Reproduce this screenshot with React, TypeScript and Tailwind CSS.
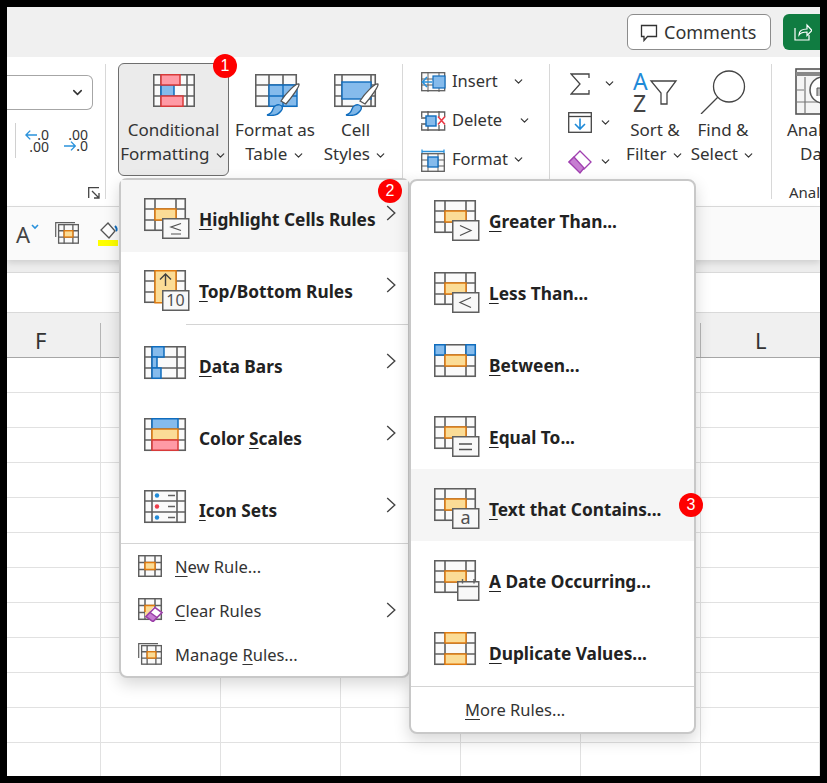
import { ReactNode } from "react";
import { LuChevronDown } from "react-icons/lu";

const GRAY = "#5f5f5f";
const ORANGE = "#e07b10";
const BLUE = "#0f6cbd";
const LBLUE = "#85bbec";
const PINK = "#ff9aa5";
const RED = "#d83a3a";
const YEL = "#fbdc96";

// base table drawing, 42x33
const TableLines = ({ xs = [11, 32] }: { xs?: number[] }) => (
  <g fill="none" stroke={GRAY} strokeWidth="1.6">
    <rect x="0.75" y="0.75" width="40.5" height="31.5" fill="#fafafa" />
    {xs.map((x) => (
      <line key={x} x1={x} x2={x} y1="0" y2="33" />
    ))}
    <line x1="0" x2="42" y1="11" y2="11" />
    <line x1="0" x2="42" y1="22" y2="22" />
  </g>
);

const Cell = ({
  x,
  y,
  w,
  h,
  fill = YEL,
  stroke = ORANGE,
}: {
  x: number;
  y: number;
  w: number;
  h: number;
  fill?: string;
  stroke?: string;
}) => <rect x={x} y={y} width={w} height={h} fill={fill} stroke={stroke} strokeWidth="1.5" />;

const Box = ({ children }: { children: ReactNode }) => (
  <g>
    <rect x="18.75" y="20.75" width="26" height="19.5" fill="#f8f8f8" stroke={GRAY} strokeWidth="1.5" />
    {children}
  </g>
);

const BadgeLabel = ({ children, size = 16 }: { children: ReactNode; size?: number }) => (
  <text x="31.5" y="36" textAnchor="middle" fontSize={size} fill="#505050" fontFamily="Noto Sans, sans-serif">
    {children}
  </text>
);

const MenuIcon = ({ name }: { name: string }) => {
  const hl = <Cell x={11} y={11} w={21} h={11} />;
  let body: ReactNode = null;
  if (name === "le") {
    body = (
      <>
        {hl}
        <Box>
          <path d="M37 25.5 27 29l10 3.5M27 36h10" fill="none" stroke="#505050" strokeWidth="1.2" />
        </Box>
      </>
    );
  } else if (name === "top") {
    body = (
      <>
        <Cell x={11} y={0.75} w={21} h={32} />
        <path d="M21.5 16V4M16 9.5l5.5-5.5L27 9.5" fill="none" stroke="#404040" strokeWidth="1.4" />
        <Box>
          <BadgeLabel>10</BadgeLabel>
        </Box>
      </>
    );
  } else if (name === "bars") {
    body = (
      <>
        <Cell x={8} y={0.75} w={12} h={10.25} fill={LBLUE} stroke={BLUE} />
        <Cell x={8} y={11} w={5} h={11} fill={LBLUE} stroke={BLUE} />
        <Cell x={8} y={22} w={9} h={10.25} fill={LBLUE} stroke={BLUE} />
      </>
    );
  } else if (name === "scales") {
    body = (
      <>
        <Cell x={8} y={0.75} w={26} h={10.25} fill={LBLUE} stroke={BLUE} />
        <Cell x={8} y={11} w={26} h={11} />
        <Cell x={8} y={22} w={26} h={10.25} fill={PINK} stroke={RED} />
      </>
    );
  } else if (name === "sets") {
    body = (
      <>
        <circle cx="13" cy="5.5" r="2.2" fill="#1f8ad8" />
        <circle cx="13" cy="16.5" r="2.2" fill="#ee3d4a" />
        <circle cx="13" cy="27.5" r="2.2" fill="#1f8ad8" />
        <path d="M24 5.5h7M24 16.5h7M24 27.5h7" stroke={GRAY} strokeWidth="1.4" />
      </>
    );
  } else if (name === "gt" || name === "lt" || name === "eq" || name === "a") {
    body = (
      <>
        {hl}
        <Box>
          {name === "gt" && <path d="m26 25.5 11 5-11 5" fill="none" stroke="#505050" strokeWidth="1.2" />}
          {name === "lt" && <path d="m37 25.5-11 5 11 5" fill="none" stroke="#505050" strokeWidth="1.2" />}
          {name === "eq" && <path d="M25 28h13M25 33.5h13" fill="none" stroke="#505050" strokeWidth="1.4" />}
          {name === "a" && <BadgeLabel size={18}>a</BadgeLabel>}
        </Box>
      </>
    );
  } else if (name === "between") {
    body = (
      <>
        <Cell x={0.75} y={0.75} w={10.25} h={10.25} fill={LBLUE} stroke={BLUE} />
        <Cell x={32} y={0.75} w={9.25} h={10.25} fill={LBLUE} stroke={BLUE} />
        {hl}
      </>
    );
  } else if (name === "date") {
    body = (
      <>
        {hl}
        <rect x="23.75" y="21.75" width="21" height="18.5" fill="#f8f8f8" stroke={GRAY} strokeWidth="1.5" />
        <path d="M23.5 26.5h21.5M28.5 19v4.5M40 19v4.5" fill="none" stroke={GRAY} strokeWidth="1.4" />
      </>
    );
  } else if (name === "dup") {
    body = (
      <>
        <Cell x={11} y={0.75} w={21} h={10.25} />
        <Cell x={11} y={22} w={21} h={10.25} />
      </>
    );
  }
  const wideCols = name === "bars" || name === "scales" || name === "sets";
  return (
    <svg width="46" height="42" viewBox="0 0 46 42" className="shrink-0">
      <TableLines xs={wideCols ? [8, 33] : [11, 32]} />
      {body}
    </svg>
  );
};

const SmallTable = ({ children }: { children?: ReactNode }) => (
  <g fill="none" stroke={GRAY} strokeWidth="1.5">
    <rect x="0.7" y="0.7" width="22.6" height="20.6" fill="#fafafa" />
    <path d="M7 0v22M17 0v22M0 7.5h24M0 14.5h24" />
    {children}
  </g>
);

const NewRuleIcon = () => (
  <svg width="24" height="22" viewBox="0 0 24 22" className="shrink-0">
    <SmallTable />
    <Cell x={7} y={7.5} w={10} h={7} />
  </svg>
);

const ClearRulesIcon = () => (
  <svg width="26" height="24" viewBox="0 0 26 24" className="shrink-0">
    <SmallTable />
    <path d="M7 7h10l-10 13z" fill={YEL} />
    <path d="M7 14V7.5h10" fill="none" stroke={ORANGE} strokeWidth="1.5" />
    <path d="m8 18.5 9-9 7 5-9 9z" fill="#fff" stroke="#9b3fa8" strokeWidth="1.6" />
    <path d="m8 18.5 4-4 7 5-4 4z" fill="#c67ed1" stroke="#9b3fa8" strokeWidth="1.4" />
  </svg>
);

const ManageIcon = () => (
  <svg width="24" height="23" viewBox="0 0 24 23" className="shrink-0">
    <path d="M0.7 15V0.7H20" fill="none" stroke={GRAY} strokeWidth="1.2" />
    <g transform="translate(3 2) scale(0.875 0.9)">
      <SmallTable />
      <Cell x={7} y={7.5} w={10} h={7} />
    </g>
  </svg>
);

const ChevronR = ({ className = "" }: { className?: string }) => (
  <svg width="10" height="16" viewBox="0 0 10 16" className={`shrink-0 ${className}`}>
    <path d="m1.2 1 7.6 7-7.6 7" fill="none" stroke="#444" strokeWidth="1.4" />
  </svg>
);

const Row = ({
  icon,
  u,
  rest,
  pre = "",
  chevron,
  active,
  iconClass = "pt-[5px]",
  textClass = "mt-[8px]",
}: {
  icon: string;
  u: string;
  rest: string;
  pre?: string;
  chevron?: boolean;
  active?: boolean;
  iconClass?: string;
  textClass?: string;
}) => (
  <div className={`flex h-[72px] items-center pl-[23px] pr-[12px] ${active ? "bg-[#f5f5f5]" : ""}`}>
    <div className={iconClass}>
      <MenuIcon name={icon} />
    </div>
    <span className={`ml-[9px] text-[17.3px] font-bold text-[#222] ${textClass}`}>
      {pre}
      <span className="underline underline-offset-[3px]">{u}</span>
      {rest}
    </span>
    {chevron && <ChevronR className="mb-[6px] ml-auto" />}
  </div>
);

const SubRow = (props: { icon: string; u: string; rest: string; active?: boolean }) => (
  <Row {...props} iconClass="pt-[7px]" textClass="mt-[10px]" />
);

const SmallRow = ({
  icon,
  pre = "",
  u,
  rest,
  chevron,
}: {
  icon: ReactNode;
  pre?: string;
  u: string;
  rest: string;
  chevron?: boolean;
}) => (
  <div className="flex h-[44px] items-center pl-[17px] pr-[12px]">
    <div className="flex w-[37px]">{icon}</div>
    <span className="mt-[2px] text-[16.5px] text-[#333]">
      {pre}
      <span className="underline underline-offset-[3px]">{u}</span>
      {rest}
    </span>
    {chevron && <ChevronR className="ml-auto" />}
  </div>
);

const Chev = ({ className = "" }: { className?: string }) => (
  <LuChevronDown size={13} strokeWidth={2.2} className={`inline-block text-[#333] ${className}`} />
);

const Brush = () => (
  <g>
    <path d="M44 10c1 2-7 13-13 20l-5-3c5-8 15-18 18-17z" fill="#fff" stroke="#555" strokeWidth="1.3" />
    <path d="M12 41c4-1 5-3 6-6 1-3 4-5 7-4 3 1 3 4 1 6-3 4-9 5-14 4z" fill="#7fb7e8" stroke={BLUE} strokeWidth="1.3" />
  </g>
);

const Cond = () => (
  <svg width="42" height="33" viewBox="0 0 42 33">
    <TableLines xs={[8, 34]} />
    <Cell x={8} y={11} w={13} h={11} fill={LBLUE} stroke={BLUE} />
    <Cell x={8} y={0.75} w={19} h={10.25} fill={PINK} stroke={RED} />
    <Cell x={8} y={22} w={22} h={10.25} fill={PINK} stroke={RED} />
  </svg>
);

const FormatTable = () => (
  <svg width="46" height="42" viewBox="0 0 46 42" className="ml-[6px]">
    <TableLines xs={[14, 28]} />
    <rect x="14" y="11" width="28" height="22" fill={LBLUE} />
    <path d="M14 22h28M28 11v22M14 11h28v21.3H14z" fill="none" stroke={BLUE} strokeWidth="1.4" />
    <Brush />
  </svg>
);

const CellStyles = () => (
  <svg width="46" height="42" viewBox="0 0 46 42" className="ml-[3px]">
    <TableLines xs={[8, 37]} />
    <rect x="8" y="8" width="29" height="17" fill={LBLUE} stroke={BLUE} strokeWidth="1.4" />
    <Brush />
  </svg>
);

const LargeButton = ({
  icon,
  l1,
  l2,
  className = "",
}: {
  icon: ReactNode;
  l1: string;
  l2: string;
  className?: string;
}) => (
  <div className={`flex flex-col items-center text-[17px] leading-[24px] text-[#333] ${className}`}>
    <div className="flex h-[44px] items-start justify-center">{icon}</div>
    <div className="whitespace-nowrap">{l1}</div>
    <div className="whitespace-nowrap">
      {l2} <Chev />
    </div>
  </div>
);

const InsertIcon = () => (
  <svg width="26" height="20" viewBox="0 0 26 20" className="shrink-0">
    <rect x="0.7" y="0.7" width="23" height="18" fill="#fafafa" stroke={GRAY} strokeWidth="1.3" />
    <path d="M0 7h24M0 13h24M7 0v20M18 0v20" stroke={GRAY} strokeWidth="1" />
    <rect x="12" y="4" width="12" height="12" fill={LBLUE} stroke={BLUE} strokeWidth="1.2" />
    <path d="M11 10H1.5M6 5 1.5 10 6 15" fill="none" stroke="#2a92dc" strokeWidth="1.6" />
  </svg>
);

const DeleteIcon = () => (
  <svg width="26" height="20" viewBox="0 0 26 20" className="shrink-0">
    <path d="M0.7 6V1h23v5M0.7 14v5h23v-5M0 7h8M0 13h8M7 0v20M18 0v6M18 14v6" fill="none" stroke={GRAY} strokeWidth="1.3" />
    <rect x="5" y="5" width="10" height="10" fill={LBLUE} stroke={BLUE} strokeWidth="1.4" />
    <path d="m17 5.5 7 8M24 5.5l-7 8" stroke="#ea3a46" strokeWidth="1.6" />
  </svg>
);

const FormatIcon = () => (
  <svg width="24" height="24" viewBox="0 0 24 24" className="shrink-0">
    <path d="M1 1.5v4M23 1.5v4M1 3.5h22" fill="none" stroke="#2a92dc" strokeWidth="1.3" />
    <rect x="0.7" y="5.7" width="22.6" height="17.6" fill="#fafafa" stroke={GRAY} strokeWidth="1.3" />
    <path d="M7 6v18M17 6v18M0 12h24M0 18h24" stroke={GRAY} strokeWidth="1" />
    <rect x="7" y="9" width="10" height="10" fill={LBLUE} stroke={BLUE} strokeWidth="1.3" />
  </svg>
);

const CellsRow = ({ icon, text, className }: { icon: ReactNode; text: string; className: string }) => (
  <div className={`flex h-[39px] items-center ${className}`}>
    <div className="flex w-[31px]">{icon}</div>
    <span className="text-[16.5px] text-[#333]">{text}</span>
    <Chev className="ml-auto" />
  </div>
);

const DecimalsIcon = ({ flip }: { flip?: boolean }) => (
  <div className="h-[24px] w-[24px] text-[14px] leading-[11px] text-[#333]">
    {flip ? (
      <>
        <div className="text-right">.00</div>
        <div className="flex items-center justify-end">
          <svg width="14" height="12" viewBox="0 0 14 12">
            <path d="M0 6h13M8 1l5 5-5 5" fill="none" stroke="#2a92dc" strokeWidth="1.6" />
          </svg>
          .0
        </div>
      </>
    ) : (
      <>
        <div className="flex items-center justify-end">
          <svg width="14" height="12" viewBox="0 0 14 12">
            <path d="M14 6H1M6 1 1 6l5 5" fill="none" stroke="#2a92dc" strokeWidth="1.6" />
          </svg>
          .0
        </div>
        <div className="text-right">.00</div>
      </>
    )}
  </div>
);

const Marker = ({ n, className }: { n: number; className: string }) => (
  <div
    className={`absolute z-30 flex h-[24px] w-[24px] items-center justify-center rounded-full bg-[#fe0000] font-['Liberation_Sans',sans-serif] text-[16px] text-white ${className}`}
  >
    {n}
  </div>
);

const columns = ["", "", "", "", "", ""];
const sheetRows = Array.from({ length: 12 }, (_, i) => i);

export default function App() {
  return (
    <div className="h-[783px] w-[827px] bg-black p-[7px] font-['Noto_Sans',sans-serif]">
      <div className="relative flex h-[769px] w-[813px] flex-col overflow-hidden bg-white">
        {/* title bar */}
        <div className="flex h-[50px] shrink-0 items-start justify-end gap-[12px] bg-[#f0f0f0] pt-[7px]">
          <div className="flex h-[36px] w-[144px] items-center rounded-[6px] border border-[#8c8c8c] bg-white pl-[12px] pt-[1px] text-[18px] text-[#333]">
            <svg width="18" height="18" viewBox="0 0 18 18" className="mr-[6px]">
              <path d="M1.5 1.5h15v11H7.5L4 16.5v-4H1.5z" fill="none" stroke="#333" strokeWidth="1.3" />
            </svg>
            Comments
          </div>
          <div className="flex h-[36px] w-[37px] items-center rounded-l-[6px] bg-[#107c41] pl-[11px]">
            <svg width="18" height="18" viewBox="0 0 18 18">
              <path d="M1 5v12h14v-5M5 12c0-4 3-6 8-6V2l5 5.5-5 5V9c-3 0-6 0-8 3z" fill="none" stroke="#fff" strokeWidth="1.2" />
            </svg>
          </div>
        </div>

        {/* ribbon */}
        <div className="flex h-[150px] shrink-0 border-b border-[#dcdcdc] bg-white">
          <div className="mt-[7px] flex h-[135px] w-[99px] shrink-0 flex-col border-r border-[#d8d8d8]">
            <div className="mt-[11px] flex h-[35px] w-[86px] items-center justify-end rounded-r-[6px] border border-l-0 border-[#a6a6a6] pr-[7px]">
              <LuChevronDown size={15} strokeWidth={2.4} className="text-[#333]" />
            </div>
            <div className="ml-[8px] mt-[13px] flex h-[35px] items-center gap-[15px] border-l border-[#d0d0d0] pl-[9px]">
              <DecimalsIcon />
              <DecimalsIcon flip />
            </div>
            <div className="mr-[5px] mt-[29px] flex justify-end">
              <svg width="12" height="12" viewBox="0 0 12 12">
                <path d="M0.7 11V0.7H11M4 4l7 7M11 6v5H6" fill="none" stroke="#444" strokeWidth="1.3" />
              </svg>
            </div>
          </div>
          <div className="mt-[7px] flex h-[135px] w-[297px] shrink-0 border-r border-[#d8d8d8]">
            <LargeButton
              icon={<Cond />}
              l1="Conditional"
              l2="Formatting"
              className="-mt-px ml-[12px] h-[113px] w-[111px] rounded-[6px] border border-[#6e6e6e] bg-[#ebebeb] pt-[10px]"
            />
            <LargeButton icon={<FormatTable />} l1="Format as" l2="Table" className="ml-[5px] w-[82px] pt-[10px]" />
            <LargeButton icon={<CellStyles />} l1="Cell" l2="Styles" className="w-[79px] pt-[10px]" />
          </div>
          <div className="mt-[7px] h-[135px] w-[147px] shrink-0 border-r border-[#d8d8d8] pl-[18px]">
            <div className="-mt-[2px] flex flex-col">
              <CellsRow icon={<InsertIcon />} text="Insert" className="w-[104px]" />
              <CellsRow icon={<DeleteIcon />} text="Delete" className="w-[110px]" />
              <CellsRow icon={<FormatIcon />} text="Format" className="w-[104px]" />
            </div>
          </div>
          <div className="mt-[7px] flex h-[135px] w-[222px] shrink-0 border-r border-[#d8d8d8] pl-[18px]">
            <div className="flex w-[54px] flex-col">
              <div className="flex h-[39px] items-center gap-[13px] pl-[2px]">
                <svg width="20" height="22" viewBox="0 0 20 22">
                  <path d="M19 5V1H1l9 10-9 10h18v-4" fill="none" stroke="#444" strokeWidth="1.3" />
                </svg>
                <Chev />
              </div>
              <div className="flex h-[39px] items-center gap-[7px]">
                <svg width="24" height="21" viewBox="0 0 24 21">
                  <rect x="0.7" y="0.7" width="22.6" height="19.6" fill="none" stroke="#444" strokeWidth="1.3" />
                  <path d="M1 4.5h22" stroke="#444" strokeWidth="1.3" />
                  <path d="M12 6.5v10M7 12l5 5 5-5" fill="none" stroke="#1f8ad8" strokeWidth="1.6" />
                </svg>
                <Chev />
              </div>
              <div className="flex h-[39px] items-center gap-[7px]">
                <svg width="24" height="24" viewBox="0 0 24 24">
                  <path d="m12 1 11 11-7 7H9l-8-7z" fill="#fff" stroke="#a040b0" strokeWidth="1.3" />
                  <path d="m6 7 10 11-4 5-11-11z" fill="#c67ed1" stroke="#a040b0" strokeWidth="1.3" />
                </svg>
                <Chev />
              </div>
            </div>
            <LargeButton
              icon={
                <svg width="46" height="42" viewBox="0 0 46 42" className="-mt-[2px]">
                  <text x="1" y="18" fontSize="23" fill="#1f8ad8" fontFamily="Noto Sans, sans-serif">A</text>
                  <text x="1" y="40" fontSize="23" fill="#444" fontFamily="Noto Sans, sans-serif">Z</text>
                  <path d="M19 9h25L35 21v11h-6V21z" fill="none" stroke="#444" strokeWidth="1.3" />
                </svg>
              }
              l1="Sort &"
              l2="Filter"
              className="w-[66px] pt-[10px]"
            />
            <LargeButton
              icon={
                <svg width="46" height="44" viewBox="0 0 46 44" className="-mt-[4px]">
                  <circle cx="29" cy="16.5" r="15.5" fill="none" stroke="#444" strokeWidth="1.3" />
                  <path d="M18 27 1 44" stroke="#444" strokeWidth="1.3" />
                </svg>
              }
              l1="Find &"
              l2="Select"
              className="w-[70px] pt-[10px]"
            />
          </div>
          <div className="mt-[4px] flex w-[49px] shrink-0 flex-col overflow-hidden pl-[15px] text-[17px] leading-[24px] text-[#333]">
            <div className="flex h-[57px] items-start pl-[8px] pt-[7px]">
              <svg width="44" height="47" viewBox="0 0 44 47" className="shrink-0">
                <rect x="1" y="1" width="42" height="45" fill="#f5f5f5" stroke="#555" strokeWidth="1.6" />
                <path d="M1 6h42" stroke="#888" strokeWidth="4" />
                <path d="M1 22h8M1 34h42M10 9v36" stroke="#777" strokeWidth="1.2" />
                <circle cx="28" cy="22" r="13" fill="#fff" stroke="#555" strokeWidth="1.5" />
                <path d="M22 28v-8h5v8M27 28V14h5v14" fill="#bbb" stroke="#555" strokeWidth="1" />
              </svg>
            </div>
            <div className="whitespace-nowrap">Analyze</div>
            <div className="whitespace-nowrap pl-[13px]">Data</div>
            <div className="mt-[14px] whitespace-nowrap pl-[2px] text-[15px]">Analysis</div>
          </div>
        </div>

        {/* formatting strip */}
        <div className="relative z-10 flex h-[53px] shrink-0 items-center bg-[#fafafa] pl-[9px] shadow-[0_3px_6px_rgba(0,0,0,0.12)]">
          <span className="text-[22px] leading-none text-[#444]">A</span>
          <svg width="8" height="6" viewBox="0 0 8 6" className="mb-[14px] ml-[1px]">
            <path d="m1 1 3 3 3-3" fill="none" stroke="#2a92dc" strokeWidth="1.6" />
          </svg>
          <svg width="24" height="23" viewBox="0 0 24 23" className="ml-[16px]">
            <path d="M0.7 15V0.7H20" fill="none" stroke={GRAY} strokeWidth="1.2" />
            <g transform="translate(3 2) scale(0.875 0.9)">
              <SmallTable />
              <Cell x={7} y={7.5} w={10} h={7} />
            </g>
          </svg>
          <div className="ml-[19px] flex flex-col items-center">
            <svg width="20" height="19" viewBox="0 0 20 19">
              <path d="m10 2 7 8-6 7-8-8z" fill="#fff" stroke="#555" strokeWidth="1.3" />
              <path d="M17 5c2 2 2 4 1 5" fill="none" stroke={BLUE} strokeWidth="2" />
            </svg>
            <div className="h-[6px] w-[20px] bg-[#ffff00]"></div>
          </div>
        </div>
        <div className="h-[13px] shrink-0 border-b border-[#d9d9d9] bg-[#ededed]"></div>
        <div className="h-[40px] shrink-0 border-b border-[#d9d9d9] bg-white"></div>

        {/* column headers */}
        <div className="grid h-[45px] shrink-0 grid-cols-[94px_600px_119px] items-end border-b border-[#a6a6a6] bg-[#f0f0f0] text-[22px] leading-[34px] text-[#333]">
          <div className="flex h-[34px] items-center border-r border-[#b5b5b5] pl-[28px]">F</div>
          <div className="h-[34px] border-r border-[#b5b5b5]"></div>
          <div className="flex h-[34px] items-center pl-[54px]">L</div>
        </div>

        {/* sheet cells */}
        <div className="grid grid-cols-[94px_120px_120px_120px_120px_120px_119px]">
          {sheetRows.map((r) => (
            <div key={r} className="contents">
              <div className="h-[35px] border-b border-r border-[#e1e1e1]"></div>
              {columns.map((_, c) => (
                <div key={c} className="h-[35px] border-b border-r border-[#e1e1e1]"></div>
              ))}
            </div>
          ))}
        </div>

        {/* main menu */}
        <div className="absolute left-[112px] top-[171px] z-20 w-[291px] rounded-[8px] border-2 border-[#c8c8c8] bg-white shadow-[0_6px_16px_rgba(0,0,0,0.16)]">
          <Row icon="le" u="H" rest="ighlight Cells Rules" chevron active />
          <Row icon="top" u="T" rest="op/Bottom Rules" chevron />
          <div className="ml-[65px] h-px bg-[#d4d4d4]"></div>
          <div className="-mb-px pt-[3px]">
            <Row icon="bars" u="D" rest="ata Bars" chevron textClass="mt-[6px]" />
            <Row icon="scales" pre="Color " u="S" rest="cales" chevron textClass="mt-[6px]" />
            <Row icon="sets" u="I" rest="con Sets" chevron textClass="mt-[6px]" />
          </div>
          <div className="h-px bg-[#d4d4d4]"></div>
          <SmallRow icon={<NewRuleIcon />} u="N" rest="ew Rule..." />
          <SmallRow icon={<ClearRulesIcon />} u="C" rest="lear Rules" chevron />
          <SmallRow icon={<ManageIcon />} pre="Manage " u="R" rest="ules..." />
        </div>

        {/* submenu */}
        <div className="absolute left-[402px] top-[172px] z-20 w-[287px] rounded-[8px] border-2 border-[#c8c8c8] bg-white shadow-[0_6px_16px_rgba(0,0,0,0.16)]">
          <SubRow icon="gt" u="G" rest="reater Than..." />
          <SubRow icon="lt" u="L" rest="ess Than..." />
          <SubRow icon="between" u="B" rest="etween..." />
          <SubRow icon="eq" u="E" rest="qual To..." />
          <SubRow icon="a" u="T" rest="ext that Contains..." active />
          <SubRow icon="date" u="A" rest=" Date Occurring..." />
          <SubRow icon="dup" u="D" rest="uplicate Values..." />
          <div className="mt-[1px] h-px bg-[#d4d4d4]"></div>
          <div className="flex h-[45px] items-center pl-[54px] pt-[2px] text-[16.5px] text-[#333]">
            <span>
              <span className="underline underline-offset-[3px]">M</span>ore Rules...
            </span>
          </div>
        </div>

        <Marker n={1} className="left-[206px] top-[47px]" />
        <Marker n={2} className="left-[371px] top-[172px]" />
        <Marker n={3} className="left-[672px] top-[486px]" />
      </div>
    </div>
  );
}
